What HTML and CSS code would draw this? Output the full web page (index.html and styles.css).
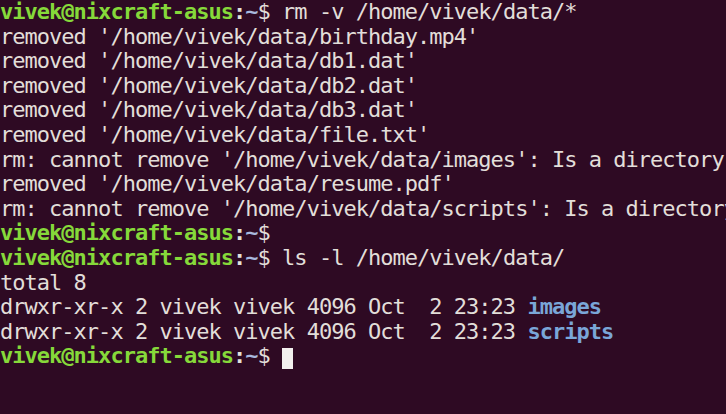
FILE: index.html
```html
<!DOCTYPE html>
<html>
<head>
<meta charset="utf-8">
<link rel="stylesheet" href="styles.css">
</head>
<body>
<pre class="term"><span class="u">vivek@nixcraft-asus</span><span class="c">:</span><span class="d">~</span>$ rm -v /home/vivek/data/*
removed '/home/vivek/data/birthday.mp4'
removed '/home/vivek/data/db1.dat'
removed '/home/vivek/data/db2.dat'
removed '/home/vivek/data/db3.dat'
removed '/home/vivek/data/file.txt'
rm: cannot remove '/home/vivek/data/images': Is a directory
removed '/home/vivek/data/resume.pdf'
rm: cannot remove '/home/vivek/data/scripts': Is a directory
<span class="u">vivek@nixcraft-asus</span><span class="c">:</span><span class="d">~</span>$
<span class="u">vivek@nixcraft-asus</span><span class="c">:</span><span class="d">~</span>$ ls -l /home/vivek/data/
total 8
drwxr-xr-x 2 vivek vivek 4096 Oct  2 23:23 <span class="dir">images</span>
drwxr-xr-x 2 vivek vivek 4096 Oct  2 23:23 <span class="dir">scripts</span>
<span class="u">vivek@nixcraft-asus</span><span class="c">:</span><span class="d">~</span>$ <span class="cursor"> </span></pre>
</body>
</html>
```
FILE: styles.css
```css
html, body {
  margin: 0;
  padding: 0;
  background: #2e0a23;
  width: 726px;
  height: 414px;
  overflow: hidden;
}
.term {
  margin: 0;
  padding: 0;
  font-family: "DejaVu Sans Mono", monospace;
  font-size: 22px;
  letter-spacing: -0.98px;
  line-height: 24.6px;
  color: #e2ded9;
  white-space: pre;
}
.u {
  color: #86d93a;
  font-weight: bold;
}
.c {
  color: #e4e0dc;
  font-weight: bold;
}
.d {
  color: #a8b8de;
  font-weight: bold;
}
.dir {
  color: #7aa6d8;
  font-weight: bold;
}
.cursor {
  display: inline-block;
  width: 11px;
  height: 21px;
  background: #f2f0ee;
  vertical-align: -4px;
}
```
